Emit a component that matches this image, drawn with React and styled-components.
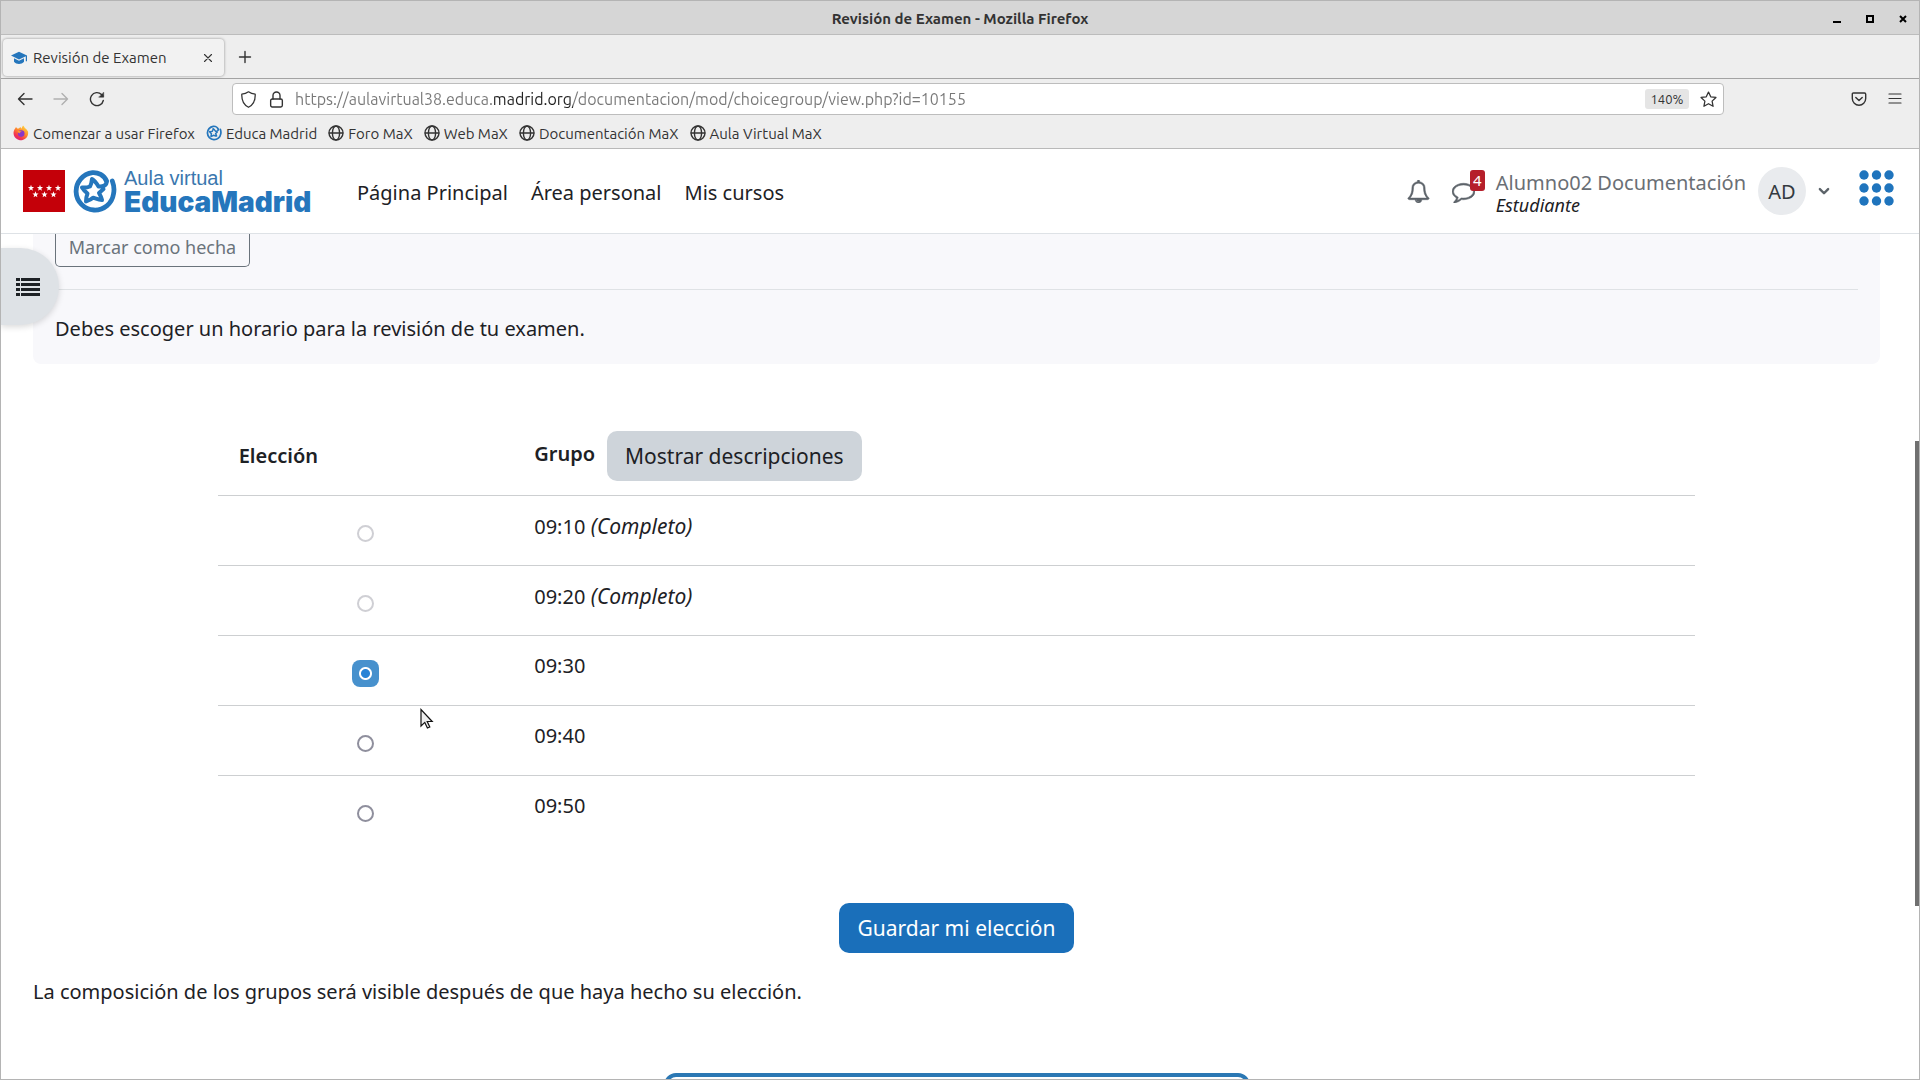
import React, { useState } from 'react';
import styled, { createGlobalStyle } from 'styled-components';

const GlobalStyle = createGlobalStyle`
    * { box-sizing: border-box; }
    body {
        margin: 0;
        background: #fff;
        color: #1d2125;
        font-family: "Noto Sans", "Open Sans", sans-serif;
    }
    button, input { font-family: inherit; }
    a { color: inherit; text-decoration: none; }
`;

const Window = styled.div`
    position: relative;
    display: flex;
    flex-direction: column;
    height: 100vh;
    overflow: hidden;
    border: 1px solid #b4b4b4;
    background: #fff;
`;

/* ---------- browser chrome ---------- */

const Chrome = styled.header`
    flex: none;
    background: #eee;
    color: #333;
    font-family: Ubuntu, "Open Sans", sans-serif;
    font-size: 15px;
    border-bottom: 1px solid #b9b9b9;
`;

const TitleBar = styled.div`
    display: grid;
    grid-template-columns: 1fr auto 1fr;
    align-items: center;
    height: 34px;
    padding-top: 2px;
    background: #d6d6d6;
    border-bottom: 1px solid #bcbcbc;
    font-weight: 600;
`;

const WindowButtons = styled.div`
    grid-column: 3;
    display: flex;
    justify-content: flex-end;
    gap: 21px;
    padding-right: 10px;
`;

const WindowTitle = styled.div`
    grid-column: 2;
`;

const IconButton = styled.button`
    display: flex;
    align-items: center;
    justify-content: center;
    width: ${props => props.$size || 16}px;
    height: ${props => props.$size || 16}px;
    padding: 0;
    border: 0;
    background: none;
    color: ${props => props.$color || '#333'};
`;

const TabBar = styled.div`
    display: flex;
    align-items: center;
    gap: 13px;
    height: 44px;
    padding: 4px 2px 3px;
    border-bottom: 1px solid #a3a3a3;
`;

const Tab = styled.div`
    display: flex;
    align-items: center;
    gap: 6px;
    width: 221px;
    height: 37px;
    padding: 1px 8px 0;
    border-radius: 4px;
    background: #f2f2f2;
    box-shadow: 0 0 3px rgba(0, 0, 0, 0.4);
`;

const TabTitle = styled.span`
    flex: 1;
`;

const NavBar = styled.div`
    display: flex;
    align-items: center;
    height: 40px;
    padding: 0 16px 0 13px;
`;

const NavButtons = styled.div`
    display: flex;
    gap: 14px;
    width: 218px;
`;

const UrlBar = styled.label`
    flex: 1;
    display: flex;
    align-items: center;
    height: 32px;
    padding: 0 6px;
    gap: 10px;
    border: 1px solid #bdbdbd;
    border-radius: 4px;
    background: #fff;
`;

/* the registered domain is darker than the rest of the address */
const UrlInput = styled.input`
    flex: 1;
    padding: 0;
    border: 0;
    outline: 0;
    font-size: 16px;
    color: transparent;
    background: linear-gradient(90deg, #777 198px, #222 198px, #222 278px, #777 278px);
    -webkit-background-clip: text;
    background-clip: text;
`;

const Zoom = styled.button`
    width: 44px;
    height: 20px;
    padding: 0;
    border: 0;
    border-radius: 3px;
    background: #e5e5e5;
    color: #333;
    font-size: 13px;
`;

const NavEnd = styled.div`
    display: flex;
    justify-content: flex-end;
    gap: 20px;
    width: 179px;
`;

const Bookmarks = styled.nav`
    display: flex;
    gap: 11px;
    height: 29px;
    padding: 2px 12px 3px;
`;

const Bookmark = styled.a`
    display: flex;
    align-items: center;
    gap: 4px;
    white-space: nowrap;
`;

/* ---------- site header ---------- */

const SiteHeader = styled.header`
    flex: none;
    display: flex;
    align-items: center;
    justify-content: space-between;
    height: 85px;
    padding: 0 25px 0 22px;
    border-bottom: 1px solid #dee2e6;
`;

const HeaderSide = styled.div`
    display: flex;
    align-items: center;
`;

const Brand = styled.a`
    display: flex;
    align-items: center;
    gap: 7px;
    width: 334px;
`;

const BrandText = styled.span`
    display: flex;
    flex-direction: column;
    padding-top: 2px;
    font-family: "Liberation Sans", Arial, sans-serif;
    font-size: 20px;
    line-height: 20px;
    color: #3a77ae;
`;

const BrandName = styled.strong`
    font-family: Inter, "Liberation Sans", sans-serif;
    font-size: 28px;
    font-weight: 900;
    line-height: 28px;
    color: #2576bc;
`;

const MainNav = styled.nav`
    display: flex;
    gap: 23px;
    padding-top: 2px;
    font-size: 20px;
`;

const MessageButton = styled(IconButton)`
    position: relative;
    margin: 0 21px 0 22px;
`;

const Badge = styled.span`
    position: absolute;
    top: -10px;
    left: 18px;
    width: 15px;
    height: 21px;
    border-radius: 3px;
    background: #b51f2b;
    color: #fff;
    font-size: 15px;
    line-height: 21px;
`;

const User = styled.div`
    display: flex;
    flex-direction: column;
    padding-top: 3px;
    font-size: 20px;
    line-height: 24px;
    color: #6a6f75;

    em {
        font-size: 18px;
        line-height: 20px;
        color: #1d2125;
    }
`;

const Avatar = styled.span`
    display: flex;
    align-items: center;
    justify-content: center;
    width: 48px;
    height: 48px;
    margin: 0 12px;
    border-radius: 50%;
    background: #e9ebee;
    font-size: 20px;
    color: #343a40;
`;

const AppsButton = styled(IconButton)`
    margin: -6px 0 0 29px;
`;

/* ---------- page ---------- */

const Page = styled.main`
    flex: 1;
    position: relative;
    min-height: 0;
    overflow: hidden;
    padding: 0 39px 0 32px;
    font-size: 20px;
    line-height: 30px;
`;

const ActivityInfo = styled.section`
    height: 130px;
    padding: 0 22px;
    border-radius: 0 0 8px 8px;
    background: #f8f8fb;
`;

const MarkDone = styled.button`
    display: block;
    width: 195px;
    height: 33px;
    padding: 0 0 7px;
    border: 1px solid #6a737b;
    border-top: 0;
    border-radius: 0 0 5px 5px;
    background: none;
    color: #6a737b;
    font-size: 18px;
    line-height: 24px;
`;

const Intro = styled.p`
    margin: 22px 0 0;
    padding-top: 24px;
    border-top: 1px solid #dfe2e5;
`;

const DrawerToggle = styled.button`
    position: absolute;
    top: 14px;
    left: 0;
    display: flex;
    align-items: center;
    width: 58px;
    height: 77px;
    padding: 0 0 0 15px;
    border: 0;
    border-radius: 0 40px 40px 0;
    background: #dee2e6;
    box-shadow: 0 2px 6px rgba(0, 0, 0, 0.15);
    color: #1d2125;
`;

const Choices = styled.table`
    width: 80%;
    margin: 53px auto 0;
    border-collapse: collapse;
    table-layout: fixed;
`;

const HeadCell = styled.th`
    width: ${props => props.$width};
    height: 78px;
    padding: 0 21px;
    text-align: left;
    font-weight: 600;
`;

const HeadContent = styled.div`
    display: flex;
    align-items: center;
    gap: 12px;
`;

const HeadLabel = styled.span`
    padding-bottom: 4px;
`;

const Cell = styled.td`
    height: 70px;
    padding: ${props => (props.$center ? '6px 0 0' : '0 21px 8px')};
    border-top: 1px solid #cdcfd1;
    text-align: ${props => (props.$center ? 'center' : 'left')};

    em { font-size: 21px; }
`;

const Radio = styled.input`
    appearance: none;
    display: block;
    width: 17px;
    height: 17px;
    margin: 0 auto;
    border: 2px solid #8f8f9d;
    border-radius: 50%;
    background: #fff;

    &:disabled { border-color: #cfcfd4; }

    &:checked {
        width: 27px;
        height: 27px;
        border: 0;
        border-radius: 8px;
        background: radial-gradient(circle, #2783d6 4px, #fff 5px, #fff 6px, #4791cd 7px);
    }
`;

const Button = styled.button`
    height: 50px;
    padding: 0 18px;
    border: 0;
    border-radius: 10px;
    background: ${props => (props.$primary ? '#1a6fba' : '#ced4da')};
    color: ${props => (props.$primary ? '#fff' : '#1d2125')};
    font-size: 21px;
    line-height: 30px;
`;

const Actions = styled.div`
    display: flex;
    justify-content: center;
    margin: 58px 0 24px;
`;

const Note = styled.p`
    margin: 0;
`;

const NextActivity = styled.div`
    width: 586px;
    height: 60px;
    margin: 66px auto 0;
    border: 4px solid #2b78b4;
    border-radius: 12px;
`;

const ScrollThumb = styled.div`
    position: absolute;
    top: 207px;
    right: 0;
    width: 4px;
    height: 465px;
    background: #707070;
`;

const Pointer = styled.svg`
    position: absolute;
    top: 707px;
    left: 418px;
`;

/* ---------- drawings ---------- */

const Line = ({ size = 16, width = 1.4, children }) => (
    <svg width={size} height={size} viewBox="0 0 16 16" fill="none" stroke="currentColor"
        strokeWidth={width} strokeLinecap="round" strokeLinejoin="round" aria-hidden="true">
        {children}
    </svg>
);

const Globe = () => (
    <Line>
        <circle cx="8" cy="8" r="7" />
        <ellipse cx="8" cy="8" rx="3.6" ry="7" />
        <path d="M1.3 8h13.4" />
    </Line>
);

const Fox = () => (
    <svg width="16" height="16" viewBox="0 0 16 16" aria-hidden="true">
        <defs>
            <linearGradient id="fox" x1="0.85" y1="0" x2="0.2" y2="1">
                <stop offset="0" stopColor="#ffde3f" />
                <stop offset="0.45" stopColor="#ff8a2b" />
                <stop offset="0.75" stopColor="#f5364e" />
                <stop offset="1" stopColor="#d8207f" />
            </linearGradient>
        </defs>
        <path d="M10 .5c1.200 1 1.700 2 1.900 2.800 1 .2 2 1.300 3.100 3.200A7.300 7.300 0 1 1 2.300 3.200L3 2l1.200 1.600 1.500-.2L7.500 2l.8 1.800z" fill="url(#fox)" />
        <circle cx="8.200" cy="8.600" r="3.300" fill="#8a35c9" />
        <path d="M4.500 6.200c1.600-.6 3-.3 4.500.9-1.500 0-2.200.5-2.600 1.300-.8-.4-1.600-1.200-1.900-2.200z" fill="#ff9a2e" />
    </svg>
);

/* one stroke: the outer ring that turns in and goes on as the star */
const EducaStar = ({ size }) => (
    <svg width={size} height={size} viewBox="0 0 45 45" fill="none" stroke="#2576bc"
        strokeLinecap="round" strokeLinejoin="round" aria-hidden="true">
        <path d="M34.500 12C32 6 26 3.200 20.500 3.600A18.800 18.800 0 1 0 41.500 25c1-4.500.5-8.500-1.200-13" strokeWidth="4.800" />
        <path d="M34.500 12c.8 4.500-4 6-8 5.500-1.800-3-3.500-5.800-6.500-7.500-.3 3-.8 5.500-2 7.500-2.500 1-5 1.200-8 1 1.500 2.500 3 4 5.500 6-1 2.500-1.500 5-1.500 8 2.500-1 5-2 7-3.800 2.800.8 5.500 2 9 2.300-.5-2.500-1.500-4.500-3-7l4.500-4" strokeWidth="4" />
    </svg>
);

const STAR = 'M0-3.200l.8 2.200 2.300.1-1.800 1.400.6 2.300L0 1.500l-1.900 1.300.6-2.300-1.800-1.400 2.300-.1z';
const FLAG_STARS = [[8, 18], [17, 18], [26, 18], [35, 18], [12.5, 24.5], [21.5, 24.5], [30.5, 24.5]];

const MadridFlag = () => (
    <svg width="42" height="42" viewBox="0 0 42 42" aria-hidden="true">
        <rect width="42" height="42" fill="#c40009" />
        {FLAG_STARS.map(([x, y]) => (
            <path key={`${x}-${y}`} d={STAR} transform={`translate(${x} ${y})`} fill="#fff" />
        ))}
    </svg>
);

const BELL = 'M912 1696q0-16-16-16-59 0-101.500-42.500t-42.500-101.500q0-16-16-16t-16 16q0 73 51.500 124.500t124.500 51.500q16 0 16-16zm-666-288h1300q-266-300-266-832 0-51-24-105t-69-103-121.500-80.500-169.500-31.500-169.500 31.500-121.500 80.500-69 103-24 105q0 532-266 832zm1482 0q0 52-38 90t-90 38h-448q0 106-75 181t-181 75-181-75-75-181h-448q-52 0-90-38t-38-90q50-42 91-88t85-119.500 74.500-158.500 50-206 19.500-260q0-152 117-282.500t307-158.500q-8-19-8-39 0-40 28-68t68-28 68 28 28 68q0 20-8 39 190 28 307 158.500t117 282.500q0 139 19.500 260t50 206 74.500 158.500 85 119.500 91 88z';
const COMMENT = 'M896 384q-204 0-381.500 69.500t-282 187.500-104.500 255q0 112 71.500 213.500t201.500 175.500l87 50-27 96q-24 91-70 172 152-63 275-171l43-38 57 6q69 8 130 8 204 0 381.500-69.500t282-187.500 104.500-255-104.500-255-282-187.500-381.500-69.500zm896 512q0 174-120 321.500t-326 233-450 85.500q-70 0-145-8-198 175-460 242-49 14-114 22h-5q-15 0-27-10.500t-16-27.500v-1q-3-4-.5-12t2-10 4.500-9.500l6-9 7-8.500 8-9q7-8 31-34.500t34.500-38 31-39.500 32.500-51 27-59 26-76q-157-89-247.500-220t-90.500-281q0-174 120-321.500t326-233 450-85.500 450 85.500 326 233 120 321.500z';

const Glyph = ({ d, size }) => (
    <svg width={size} height={size} viewBox="0 0 1792 1792" fill="currentColor" stroke="currentColor"
        strokeWidth="40" aria-hidden="true">
        <path d={d} />
    </svg>
);

const DOTS_X = [5, 17.5, 30];
const DOTS_Y = [5, 18, 31];

const BOOKMARKS = [
    { name: 'Comenzar a usar Firefox', icon: <Fox /> },
    { name: 'Educa Madrid', icon: <EducaStar size={16} /> },
    { name: 'Foro MaX', icon: <Globe /> },
    { name: 'Web MaX', icon: <Globe /> },
    { name: 'Documentación MaX', icon: <Globe /> },
    { name: 'Aula Virtual MaX', icon: <Globe /> },
];

const GROUPS = [
    { time: '09:10', full: true },
    { time: '09:20', full: true },
    { time: '09:30' },
    { time: '09:40' },
    { time: '09:50' },
];

const Browser = () => (
    <Chrome>
        <TitleBar>
            <WindowTitle>Revisión de Examen - Mozilla Firefox</WindowTitle>
            <WindowButtons>
                <IconButton $size={12} $color="#000" aria-label="Minimizar">
                    <svg width="12" height="12"><path d="M2 8h8v2H2z" /></svg>
                </IconButton>
                <IconButton $size={12} $color="#000" aria-label="Maximizar">
                    <svg width="12" height="12"><path d="M3 3h6v6H3z" fill="none" stroke="#000" strokeWidth="2" /></svg>
                </IconButton>
                <IconButton $size={12} $color="#000" aria-label="Cerrar">
                    <svg width="12" height="12"><path d="M3 3l6 6M9 3L3 9" stroke="#000" strokeWidth="2" /></svg>
                </IconButton>
            </WindowButtons>
        </TitleBar>
        <TabBar>
            <Tab>
                <svg width="16" height="16" viewBox="0 0 16 16" fill="#2576bc" aria-hidden="true">
                    <path d="M8 1.800L16 5.500v5.700h-1.200V6.300L8 9.400 0 5.500z" />
                    <path d="M3 8.200l5 2.500 5-2.500v3.600c-2.500 3-7.500 3-10 0z" />
                </svg>
                <TabTitle>Revisión de Examen</TabTitle>
                <IconButton aria-label="Cerrar pestaña">
                    <Line size={16} width={1.1}><path d="M4.500 4.500l7 7M11.500 4.500l-7 7" /></Line>
                </IconButton>
            </Tab>
            <IconButton aria-label="Nueva pestaña">
                <Line><path d="M8 2.500v11M2.500 8h11" /></Line>
            </IconButton>
        </TabBar>
        <NavBar>
            <NavButtons>
                <IconButton $size={22} aria-label="Atrás">
                    <Line><path d="M15 8H1.500M7 2.500L1.500 8 7 13.500" /></Line>
                </IconButton>
                <IconButton $size={22} $color="#b0b0b0" aria-label="Adelante">
                    <Line><path d="M1 8h13.500M9 2.500L14.500 8 9 13.500" /></Line>
                </IconButton>
                <IconButton $size={22} aria-label="Recargar">
                    <Line>
                        <path d="M14.300 9.500A6.500 6.500 0 1 1 12.500 3.500L14 5" />
                        <path d="M14.700 1.500v4.700H10z" fill="currentColor" strokeWidth="0.5" />
                    </Line>
                </IconButton>
            </NavButtons>
            <UrlBar>
                <IconButton $size={18} aria-label="Protección">
                    <Line size={17} width={1.2}><path d="M8 .8c2 1.400 4 2 6.300 2.200.3 6.500-2 10.300-6.300 12.300C3.700 13.300 1.400 9.500 1.700 3 4 2.800 6 2.200 8 .8z" /></Line>
                </IconButton>
                <IconButton $size={18} aria-label="Conexión segura">
                    <Line size={17} width={1.3}>
                        <rect x="2.500" y="7.500" width="11" height="7.500" rx="1.500" />
                        <path d="M4.700 7.500V4.300a3.300 3.300 0 0 1 6.600 0v3.200" />
                    </Line>
                </IconButton>
                <UrlInput
                    aria-label="Dirección"
                    defaultValue="https://aulavirtual38.educa.madrid.org/documentacion/mod/choicegroup/view.php?id=10155"
                />
                <Zoom>140%</Zoom>
                <IconButton $size={18} aria-label="Añadir a marcadores">
                    <Line size={17} width={1.2}><path d="M8 1l2.100 4.500 4.900.6-3.600 3.400.9 4.900L8 12l-4.300 2.400.9-4.900L1 6.100l4.900-.6z" /></Line>
                </IconButton>
            </UrlBar>
            <NavEnd>
                <IconButton aria-label="Pocket">
                    <Line>
                        <path d="M2.500 2h11c.8 0 1.200.5 1.200 1.200V7.500a6.700 6.700 0 0 1-13.400 0V3.200C1.300 2.500 1.700 2 2.500 2z" />
                        <path d="M4.800 6.500L8 9.600l3.200-3.100" />
                    </Line>
                </IconButton>
                <IconButton aria-label="Menú">
                    <Line width={1.2}><path d="M2 3h12M2 7.500h12M2 12h12" /></Line>
                </IconButton>
            </NavEnd>
        </NavBar>
        <Bookmarks>
            {BOOKMARKS.map(({ name, icon }) => (
                <Bookmark key={name} href="#">{icon}{name}</Bookmark>
            ))}
        </Bookmarks>
    </Chrome>
);

const Header = () => (
    <SiteHeader>
        <HeaderSide>
            <Brand href="#">
                <MadridFlag />
                <EducaStar size={45} />
                <BrandText>
                    Aula virtual
                    <BrandName>EducaMadrid</BrandName>
                </BrandText>
            </Brand>
            <MainNav>
                <a href="#">Página Principal</a>
                <a href="#">Área personal</a>
                <a href="#">Mis cursos</a>
            </MainNav>
        </HeaderSide>
        <HeaderSide>
            <IconButton $size={23} $color="#5c6369" aria-label="Notificaciones">
                <Glyph d={BELL} size={23} />
            </IconButton>
            <MessageButton $size={23} $color="#5c6369" aria-label="Mensajes">
                <Glyph d={COMMENT} size={23} />
                <Badge>4</Badge>
            </MessageButton>
            <User>
                <span>Alumno02 Documentación</span>
                <em>Estudiante</em>
            </User>
            <Avatar>AD</Avatar>
            <IconButton $size={12} $color="#5c6369" aria-label="Menú de usuario">
                <Line size={12} width={3.2}><path d="M2.500 5.500L8 11l5.500-5.500" /></Line>
            </IconButton>
            <AppsButton $size={35} aria-label="Aplicaciones">
                <svg width="35" height="36" fill="#1f74bd">
                    {DOTS_Y.map(y => DOTS_X.map(x => <circle key={`${x}-${y}`} cx={x} cy={y} r="4.700" />))}
                </svg>
            </AppsButton>
        </HeaderSide>
    </SiteHeader>
);

const ChoiceRow = ({ time, full, checked, onPick }) => (
    <tr>
        <Cell $center>
            <Radio type="radio" name="grupo" id={`g-${time}`} disabled={full} checked={checked} onChange={onPick} />
        </Cell>
        <Cell>
            <label htmlFor={`g-${time}`}>{time}{full && <em> (Completo)</em>}</label>
        </Cell>
    </tr>
);

const App = () => {
    const [picked, setPicked] = useState('09:30');

    return (
        <Window>
            <GlobalStyle />
            <Browser />
            <Header />
            <Page>
                <ActivityInfo>
                    <MarkDone>Marcar como hecha</MarkDone>
                    <Intro>Debes escoger un horario para la revisión de tu examen.</Intro>
                </ActivityInfo>
                <Choices>
                    <thead>
                        <tr>
                            <HeadCell $width="20%">Elección</HeadCell>
                            <HeadCell>
                                <HeadContent>
                                    <HeadLabel>Grupo</HeadLabel>
                                    <Button type="button">Mostrar descripciones</Button>
                                </HeadContent>
                            </HeadCell>
                        </tr>
                    </thead>
                    <tbody>
                        {GROUPS.map(({ time, full }) => (
                            <ChoiceRow
                                key={time}
                                time={time}
                                full={full}
                                checked={picked === time}
                                onPick={() => setPicked(time)}
                            />
                        ))}
                    </tbody>
                </Choices>
                <Actions>
                    <Button $primary>Guardar mi elección</Button>
                </Actions>
                <Note>La composición de los grupos será visible después de que haya hecho su elección.</Note>
                <NextActivity />
                <DrawerToggle aria-label="Abrir índice del curso">
                    <svg width="24" height="18" fill="currentColor">
                        {[0, 5, 10, 15].map(y => (
                            <path key={y} d={`M0 ${y}h4v3H0zM5 ${y}h19v3H5z`} />
                        ))}
                    </svg>
                </DrawerToggle>
                <ScrollThumb />
            </Page>
            <Pointer width="16" height="22" viewBox="0 0 16 22" aria-hidden="true">
                <path d="M2 1.500v16.500l3.800-3.600 2.600 5.600 2.400-1-2.600-5.500h5z" fill="#eee" stroke="#111" strokeWidth="1.200" />
            </Pointer>
        </Window>
    );
};

export default App;
